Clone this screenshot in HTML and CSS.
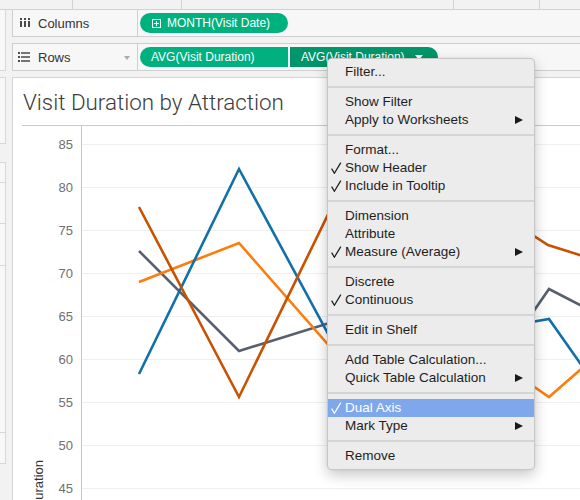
FILE: index.html
```html
<!DOCTYPE html>
<html>
<head>
<meta charset="utf-8">
<title>Visit Duration by Attraction</title>
<link rel="stylesheet" href="styles.css">
</head>
<body>
<div class="app">
  <div class="strip">
    <div class="cell c1"></div><div class="cell c2"></div><div class="cell c3"></div><div class="cell c4"></div><div class="cell c5"></div>
  </div>
  <div class="body">
    <aside class="side">
      <div class="box box-a"></div>
      <div class="box box-b"></div>
      <div class="box box-c">
        <div class="sec s1"></div><div class="sec s2"></div><div class="sec s3"></div><div class="sec s4"></div><div class="sec s5"></div>
      </div>
    </aside>
    <main class="main">
      <div class="shelf shelf-cols">
        <div class="shelf-label">
          <svg class="shelf-icon" width="12" height="10" viewBox="0 0 12 10"><g fill="#4a4a4a"><rect x="1" y="0" width="2" height="2"/><rect x="1" y="3" width="2" height="6"/><rect x="5" y="0" width="2" height="2"/><rect x="5" y="3" width="2" height="6"/><rect x="9" y="0" width="2" height="2"/><rect x="9" y="3" width="2" height="6"/></g></svg>
          <span>Columns</span>
        </div>
        <div class="shelf-pills">
          <div class="pill pill-round">
            <svg class="pill-plus" width="9" height="9" viewBox="0 0 9 9"><rect x="0.5" y="0.5" width="8" height="8" fill="none" stroke="#fff" stroke-width="1"/><path d="M4.5 2v5M2 4.5h5" stroke="#fff" stroke-width="1"/></svg>
            <span>MONTH(Visit Date)</span>
          </div>
        </div>
      </div>
      <div class="shelf shelf-rows">
        <div class="shelf-label">
          <svg class="shelf-icon" width="12" height="10" viewBox="0 0 12 10"><g fill="#4a4a4a"><rect x="0" y="0" width="2" height="2"/><rect x="3" y="0.25" width="9" height="1.5"/><rect x="0" y="4" width="2" height="2"/><rect x="3" y="4.25" width="9" height="1.5"/><rect x="0" y="8" width="2" height="2"/><rect x="3" y="8.25" width="9" height="1.5"/></g></svg>
          <span>Rows</span>
          <span class="shelf-caret"></span>
        </div>
        <div class="shelf-pills">
          <div class="pill pill-left"><span>AVG(Visit Duration)</span></div>
          <div class="pill pill-right pill-active"><span>AVG(Visit Duration)</span><span class="pill-caret"></span></div>
        </div>
      </div>
      <div class="card">
        <div class="card-title">Visit Duration by Attraction</div>
        <svg class="chart" width="600" height="380" viewBox="0 0 600 380">
          <g stroke="#efefef" stroke-width="1">
            <line x1="69" y1="18.5" x2="600" y2="18.5"/>
            <line x1="69" y1="61.5" x2="600" y2="61.5"/>
            <line x1="69" y1="104.5" x2="600" y2="104.5"/>
            <line x1="69" y1="147.5" x2="600" y2="147.5"/>
            <line x1="69" y1="190.5" x2="600" y2="190.5"/>
            <line x1="69" y1="233.5" x2="600" y2="233.5"/>
            <line x1="69" y1="276.5" x2="600" y2="276.5"/>
            <line x1="69" y1="319.5" x2="600" y2="319.5"/>
            <line x1="69" y1="362.5" x2="600" y2="362.5"/>
          </g>
          <line x1="68.5" y1="0" x2="68.5" y2="380" stroke="#c8c8c8" stroke-width="1"/>
          <g class="tick" text-anchor="end">
            <text x="60" y="23">85</text>
            <text x="60" y="66">80</text>
            <text x="60" y="109">75</text>
            <text x="60" y="152">70</text>
            <text x="60" y="195">65</text>
            <text x="60" y="238">60</text>
            <text x="60" y="281">55</text>
            <text x="60" y="324">50</text>
            <text x="60" y="367">45</text>
          </g>
          <text class="axis-title" transform="translate(29.5 334) rotate(-90)" text-anchor="end">Avg. Visit Duration</text>
          <g fill="none" stroke-width="2.6" stroke-linejoin="miter" stroke-linecap="butt">
            <polyline stroke="#57606c" points="126,125 226,225 326,194 507,205 536,163 627,210"/>
            <polyline stroke="#fc7d0b" points="126,156 226,117 326,231 507,251 536,271 627,192"/>
            <polyline stroke="#1170aa" points="126,248 226,43 326,228 507,198 536,193 627,322"/>
            <polyline stroke="#c85200" points="126,81 226,271 326,66 507,101 535,119 627,148"/>
          </g>
        </svg>
      </div>
    </main>
  </div>

  <div class="menu">
    <div class="mi">Filter...</div>
    <div class="sep"></div>
    <div class="mi">Show Filter</div>
    <div class="mi sub">Apply to Worksheets</div>
    <div class="sep"></div>
    <div class="mi">Format...</div>
    <div class="mi"><svg class="chk" width="11" height="12" viewBox="0 0 11 12"><path d="M0.6 6.6 L3.4 11.2 L9.8 0.6" fill="none" stroke="currentColor" stroke-width="1.25"/></svg>Show Header</div>
    <div class="mi"><svg class="chk" width="11" height="12" viewBox="0 0 11 12"><path d="M0.6 6.6 L3.4 11.2 L9.8 0.6" fill="none" stroke="currentColor" stroke-width="1.25"/></svg>Include in Tooltip</div>
    <div class="sep"></div>
    <div class="mi">Dimension</div>
    <div class="mi">Attribute</div>
    <div class="mi sub"><svg class="chk" width="11" height="12" viewBox="0 0 11 12"><path d="M0.6 6.6 L3.4 11.2 L9.8 0.6" fill="none" stroke="currentColor" stroke-width="1.25"/></svg>Measure (Average)</div>
    <div class="sep"></div>
    <div class="mi">Discrete</div>
    <div class="mi"><svg class="chk" width="11" height="12" viewBox="0 0 11 12"><path d="M0.6 6.6 L3.4 11.2 L9.8 0.6" fill="none" stroke="currentColor" stroke-width="1.25"/></svg>Continuous</div>
    <div class="sep"></div>
    <div class="mi">Edit in Shelf</div>
    <div class="sep"></div>
    <div class="mi">Add Table Calculation...</div>
    <div class="mi sub">Quick Table Calculation</div>
    <div class="sep"></div>
    <div class="mi hl"><svg class="chk" width="11" height="12" viewBox="0 0 11 12"><path d="M0.6 6.6 L3.4 11.2 L9.8 0.6" fill="none" stroke="currentColor" stroke-width="1.25"/></svg>Dual Axis</div>
    <div class="mi sub">Mark Type</div>
    <div class="sep"></div>
    <div class="mi">Remove</div>
  </div>
</div>
</body>
</html>
```
FILE: styles.css
```css
* { box-sizing: border-box; }
html, body { margin: 0; padding: 0; }
body {
  width: 580px;
  height: 500px;
  overflow: hidden;
  background: #f2f2f2;
  font-family: "Liberation Sans", Arial, sans-serif;
  color: #333;
}
.app { position: relative; width: 580px; height: 500px; overflow: hidden; }

.strip {
  display: flex;
  height: 10px;
  border-bottom: 1px solid #d2d2d2;
}
.cell { height: 9px; border-right: 1px solid #d2d2d2; }
.c1 { width: 73px; }
.c2 { width: 109px; }
.c3 { width: 272px; }
.c4 { width: 86px; }
.c5 { flex: 1; border-right: none; }

.body { display: flex; }

.side { width: 6px; flex: none; }
.box { background: #f8f8f8; border-right: 1px solid #d8d8d8; }
.box-a { height: 61px; border-bottom: 1px solid #d8d8d8; }
.box-b { margin-top: 6px; height: 67px; border-top: 1px solid #d8d8d8; border-bottom: 1px solid #d8d8d8; }
.box-c { margin-top: 18px; border-top: 1px solid #d8d8d8; border-bottom: 1px solid #d8d8d8; }
.sec { border-bottom: 1px solid #d8d8d8; }
.s1 { height: 20px; }
.s2 { height: 41px; }
.s3 { height: 42px; }
.s4 { height: 167px; }
.s5 { height: 30px; border-bottom: none; }

.main { margin-left: 6px; width: 640px; flex: none; }

.shelf {
  display: flex;
  background: #f7f7f7;
  border-left: 1px solid #cfcfcf;
  border-bottom: 1px solid #cfcfcf;
}
.shelf-cols { height: 27px; }
.shelf-rows { height: 28px; margin-top: 6px; border-top: 1px solid #cfcfcf; }

.shelf-label {
  position: relative;
  width: 125px;
  flex: none;
  display: flex;
  align-items: center;
  padding-left: 6px;
  border-right: 1px solid #cfcfcf;
  font-size: 13px;
  color: #333;
}
.shelf-icon { flex: none; margin-right: 7px; }
.shelf-rows .shelf-icon { margin-left: -1px; margin-right: 8px; }
.shelf-caret {
  position: absolute;
  left: 111px;
  top: 12px;
  width: 0; height: 0;
  border-left: 3.5px solid transparent;
  border-right: 3.5px solid transparent;
  border-top: 4px solid #ababab;
}

.shelf-pills {
  display: flex;
  align-items: center;
  padding-left: 2px;
  gap: 2px;
}
.pill {
  height: 20px;
  width: 148px;
  display: flex;
  align-items: center;
  background: #00b180;
  color: #fff;
  font-size: 12px;
  padding-left: 11px;
  white-space: nowrap;
}
.pill-round { border-radius: 10px; padding-left: 12px; }
.pill-plus { margin-right: 6px; flex: none; }
.pill-left { border-radius: 10px 0 0 10px; }
.pill-right { border-radius: 0 10px 10px 0; }
.pill-active { background: #00956a; }
.pill-caret {
  margin-left: 10px;
  width: 0; height: 0;
  border-left: 4px solid transparent;
  border-right: 4px solid transparent;
  border-top: 5px solid #fff;
}

.card {
  margin-top: 6px;
  height: 440px;
  background: #fff;
  border-top: 1px solid #d4d4d4;
  border-left: 1px solid #d4d4d4;
}
.card-title {
  margin-left: 9px;
  height: 48px;
  border-bottom: 1px solid #c9c9c9;
  padding: 12px 0 0 1px;
  font-family: Roboto, "Liberation Sans", sans-serif;
  font-weight: 300;
  font-size: 22.4px;
  line-height: 24px;
  color: #3b3b3b;
  white-space: nowrap;
}
.chart { display: block; }
.tick { font-family: "Liberation Sans", Arial, sans-serif; font-size: 13px; fill: #6f6f6f; }
.axis-title { font-family: "Liberation Sans", Arial, sans-serif; font-size: 13px; fill: #333; }

.menu {
  position: absolute;
  left: 327px;
  top: 58px;
  width: 208px;
  padding: 4px 0;
  background: #ececec;
  border: 1px solid rgba(0, 0, 0, 0.16);
  border-radius: 5px;
  box-shadow: 0 5px 14px rgba(0, 0, 0, 0.22), 0 0 2px rgba(0, 0, 0, 0.08);
  font-family: "Liberation Sans", Arial, sans-serif;
  font-size: 13.5px;
  color: #1e1e1e;
}
.mi {
  position: relative;
  height: 18px;
  line-height: 18px;
  padding-left: 17px;
  white-space: nowrap;
}
.chk {
  position: absolute;
  left: 3px;
  top: 3px;
}
.mi.sub::after {
  content: "";
  position: absolute;
  right: 11px;
  top: 4.5px;
  width: 0; height: 0;
  border-top: 4.5px solid transparent;
  border-bottom: 4.5px solid transparent;
  border-left: 8px solid #1a1a1a;
}
.mi.hl { background: #7fa7ec; color: #fff; }
.sep { height: 2px; margin: 5px 0; background: #d5d5d5; }
```
